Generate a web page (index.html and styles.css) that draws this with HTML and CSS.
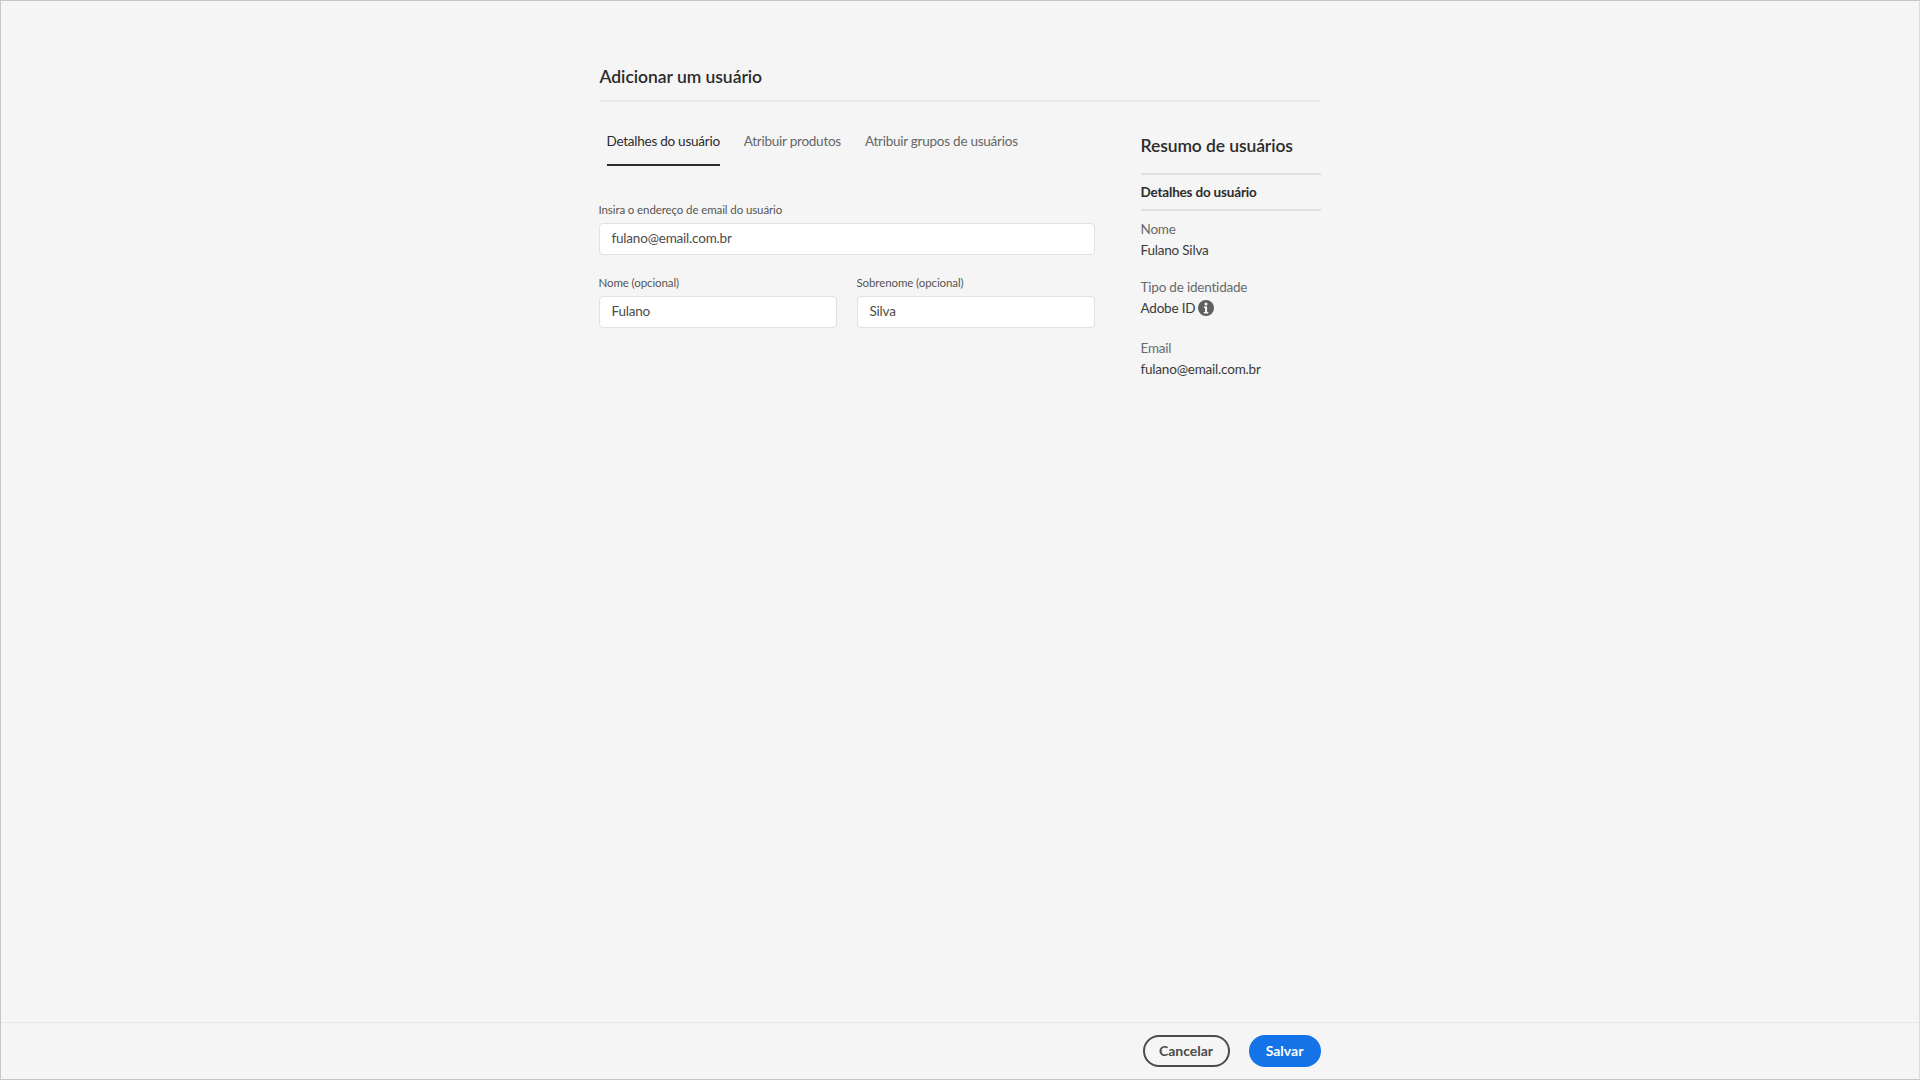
FILE: index.html
```html
<!DOCTYPE html>
<html lang="pt-BR">
<head>
<meta charset="utf-8">
<title>Adicionar um usuário</title>
<link rel="stylesheet" href="styles.css">
</head>
<body>
<div class="frame">
  <main class="main">
    <div class="content">
      <h1 class="title">Adicionar um usuário</h1>
      <div class="columns">
        <section class="form-col">
          <nav class="tabs">
            <span class="tab active">Detalhes do usuário</span>
            <span class="tab">Atribuir produtos</span>
            <span class="tab">Atribuir grupos de usuários</span>
          </nav>
          <div class="field email-field">
            <label class="label">Insira o endereço de email do usuário</label>
            <div class="input">fulano@email.com.br</div>
          </div>
          <div class="name-row">
            <div class="field">
              <label class="label">Nome (opcional)</label>
              <div class="input">Fulano</div>
            </div>
            <div class="field">
              <label class="label">Sobrenome (opcional)</label>
              <div class="input">Silva</div>
            </div>
          </div>
        </section>
        <aside class="summary">
          <h2 class="summary-title">Resumo de usuários</h2>
          <h3 class="summary-sub">Detalhes do usuário</h3>
          <dl class="summary-list">
            <div class="item"><dt>Nome</dt><dd>Fulano Silva</dd></div>
            <div class="item"><dt>Tipo de identidade</dt><dd class="with-icon">Adobe ID
              <svg class="info" viewBox="0 0 16 16" width="16" height="16" aria-hidden="true"><circle cx="8" cy="8" r="8" fill="#5f5f5f"/><circle cx="8" cy="3.9" r="1.5" fill="#f5f5f5"/><path d="M5.9 6.5h3.2v5.4h1.2v1.5H5.8v-1.5h1.2V8H5.9z" fill="#f5f5f5"/></svg></dd></div>
            <div class="item"><dt>Email</dt><dd>fulano@email.com.br</dd></div>
          </dl>
        </aside>
      </div>
    </div>
  </main>
  <footer class="footer">
    <div class="footer-inner">
      <button class="btn secondary">Cancelar</button>
      <button class="btn primary">Salvar</button>
    </div>
  </footer>
</div>
</body>
</html>
```
FILE: styles.css
```css
* { box-sizing: border-box; }
html, body { margin: 0; height: 100%; }
body {
  background: #f5f5f5;
  color: #2c2c2c;
  font-family: Lato, "Noto Sans", sans-serif;
  font-size: 14px;
}
.frame {
  height: 1080px;
  display: flex;
  flex-direction: column;
  border: 1px solid #c6c6c6;
  border-right-color: #dcdcdc;
}
.main { flex: 1; display: flex; justify-content: center; }
.content { width: 722px; margin-left: -1px; padding-top: 64px; }
.title {
  margin: 0;
  box-sizing: content-box;
  height: 35px;
  width: 721px;
  padding-left: 1px;
  font-size: 17.5px;
  line-height: 24px;
  font-weight: 600;
  letter-spacing: -0.04px;
  color: #2c2c2c;
  border-bottom: 2px solid #eaeaea;
}
.columns { display: flex; gap: 46px; }
.form-col { width: 496px; }
.tabs { display: flex; gap: 24px; padding: 30px 0 0 8px; height: 64px; }
.tab {
  height: 34px;
  font-size: 13.5px;
  line-height: 18px;
  letter-spacing: -0.25px;
  color: #666;
  white-space: nowrap;
}
.active { color: #2c2c2c; border-bottom: 2px solid #2c2c2c; }
.field { flex: 1; }
.email-field { margin-top: 36px; }
.label {
  display: block;
  font-size: 11.5px;
  line-height: 16px;
  letter-spacing: -0.1px;
  color: #555;
  margin-bottom: 5px;
}
.input {
  height: 32px;
  background: #fff;
  border: 1px solid #e1e1e1;
  border-radius: 4px;
  padding: 0 12px;
  font-size: 13.5px;
  line-height: 28px;
  letter-spacing: -0.2px;
  color: #4b4b4b;
}
.name-row { display: flex; gap: 20px; margin-top: 20px; }
.summary { width: 180px; padding-top: 32px; }
.summary-title {
  margin: 0;
  height: 41px;
  font-size: 17.5px;
  line-height: 24px;
  font-weight: 600;
  letter-spacing: -0.1px;
  color: #2c2c2c;
  border-bottom: 2px solid #e0e0e0;
}
.summary-sub {
  margin: 0;
  height: 36px;
  font-size: 13.5px;
  line-height: 34px;
  font-weight: 700;
  letter-spacing: -0.18px;
  color: #2c2c2c;
  border-bottom: 2px solid #e0e0e0;
}
.summary-list { margin: 8px 0 0; }
.item { margin-bottom: 16px; }
.item dt, .item dd {
  margin: 0;
  font-size: 13.5px;
  line-height: 21px;
  letter-spacing: -0.2px;
}
.item dt { color: #6a6a6a; }
.item dd { color: #3a3a3a; }
.with-icon { display: flex; align-items: center; gap: 3px; }
.info { position: relative; top: -1px; }
.item:nth-child(2) { margin-bottom: 19px; }
.footer { height: 57px; border-top: 1px solid #e8e8e8; display: flex; justify-content: center; }
.footer-inner { width: 722px; margin-left: -1px; display: flex; justify-content: flex-end; gap: 19px; padding-top: 12px; }
.btn {
  height: 32px;
  border-radius: 16px;
  font-family: inherit;
  font-size: 14px;
  font-weight: 700;
  line-height: 1;
  padding: 0;
}
.secondary { width: 87px; background: transparent; border: 2px solid #4b4b4b; color: #4b4b4b; }
.primary { width: 72px; background: #1473e6; border: 0; color: #fff; }
```
